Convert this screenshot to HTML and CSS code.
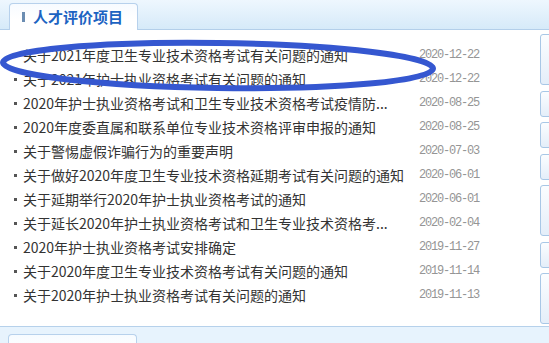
FILE: index.html
```html
<!DOCTYPE html>
<html lang="zh-CN">
<head>
<meta charset="utf-8">
<title>人才评价项目</title>
<link rel="stylesheet" href="styles.css">
</head>
<body>
<div class="page">
  <section class="panel">
    <div class="tabbar">
      <div class="tab"><span class="tab-mark"></span><span class="tab-title">人才评价项目</span></div>
    </div>
    <div class="panel-body">
      <ul class="news">
        <li class="row"><span class="dot"></span><span class="title">关于2021年度卫生专业技术资格考试有关问题的通知</span><span class="date">2020-12-22</span></li>
        <li class="row"><span class="dot"></span><span class="title">关于2021年护士执业资格考试有关问题的通知</span><span class="date">2020-12-22</span></li>
        <li class="row"><span class="dot"></span><span class="title">2020年护士执业资格考试和卫生专业技术资格考试疫情防...</span><span class="date">2020-08-25</span></li>
        <li class="row"><span class="dot"></span><span class="title">2020年度委直属和联系单位专业技术资格评审申报的通知</span><span class="date">2020-08-25</span></li>
        <li class="row"><span class="dot"></span><span class="title">关于警惕虚假诈骗行为的重要声明</span><span class="date">2020-07-03</span></li>
        <li class="row"><span class="dot"></span><span class="title">关于做好2020年度卫生专业技术资格延期考试有关问题的通知</span><span class="date">2020-06-01</span></li>
        <li class="row"><span class="dot"></span><span class="title">关于延期举行2020年护士执业资格考试的通知</span><span class="date">2020-06-01</span></li>
        <li class="row"><span class="dot"></span><span class="title">关于延长2020年护士执业资格考试和卫生专业技术资格考...</span><span class="date">2020-02-04</span></li>
        <li class="row"><span class="dot"></span><span class="title">2020年护士执业资格考试安排确定</span><span class="date">2019-11-27</span></li>
        <li class="row"><span class="dot"></span><span class="title">关于2020年度卫生专业技术资格考试有关问题的通知</span><span class="date">2019-11-14</span></li>
        <li class="row"><span class="dot"></span><span class="title">关于2020年护士执业资格考试有关问题的通知</span><span class="date">2019-11-13</span></li>
      </ul>
      <div class="side">
        <div class="side-btn tall"></div>
        <div class="side-btn"></div>
        <div class="side-btn"></div>
        <div class="side-btn"></div>
        <div class="side-btn tall"></div>
        <div class="side-btn"></div>
        <div class="side-btn tall"></div>
      </div>
    </div>
  </section>
  <section class="panel next">
    <div class="tabbar-next">
      <div class="tab"><span class="tab-mark"></span><span class="tab-title">人才评价动态</span></div>
    </div>
  </section>
  <svg class="annotation" width="549" height="343" viewBox="0 0 549 343" aria-hidden="true">
    <ellipse cx="218" cy="65.5" rx="215" ry="22.5" transform="rotate(0.8 218 65.5)" fill="none" stroke="#3557d0" stroke-width="6"/>
  </svg>
</div>
</body>
</html>
```
FILE: styles.css
```css
html, body {
  margin: 0;
  padding: 0;
  background: #ffffff;
}
.page {
  position: relative;
  width: 549px;
  height: 343px;
  overflow: hidden;
  font-family: "Noto Sans CJK SC", "Noto Sans", sans-serif;
}
.tabbar {
  display: flex;
  align-items: flex-end;
  height: 29px;
  padding-left: 9px;
  border-bottom: 1px solid #b3cfea;
  background: linear-gradient(#eef7fe, #d6eaf9);
}
.tab {
  display: flex;
  align-items: center;
  box-sizing: border-box;
  width: 129px;
  height: 27px;
  margin-bottom: -1px;
  padding-left: 12px;
  border: 1px solid #b7d1ec;
  border-bottom: none;
  border-radius: 4px 4px 0 0;
  background: linear-gradient(#f7fbff, #ffffff 60%);
}
.tab-mark {
  width: 3px;
  height: 10px;
  margin-right: 8px;
  background: #6b8db2;
}
.tab-title {
  font-size: 15px;
  font-weight: bold;
  color: #1c63c2;
  line-height: 16px;
}
.panel-body {
  display: flex;
  height: 296px;
  border-bottom: 1px solid #b6d1eb;
  background: #ffffff;
}
.news {
  list-style: none;
  margin: 0;
  padding: 13px 0 0 0;
  width: 540px;
  flex: none;
}
.row {
  display: flex;
  align-items: center;
  height: 24px;
  padding-left: 14px;
}
.dot {
  width: 3px;
  height: 3px;
  margin-right: 6px;
  background: #555555;
  flex: none;
}
.title {
  width: 396px;
  flex: none;
  white-space: nowrap;
  overflow: hidden;
  font-size: 14px;
  line-height: 24px;
  color: #333333;
}
.date {
  font-family: "Liberation Mono", monospace;
  font-size: 12px;
  letter-spacing: -1.2px;
  color: #959595;
  white-space: nowrap;
}
.side {
  display: flex;
  flex-direction: column;
  gap: 5.5px;
  padding-top: 4px;
}
.side-btn {
  box-sizing: border-box;
  width: 20px;
  height: 26px;
  border: 1px solid #a8c7e6;
  border-radius: 3px;
  background: linear-gradient(#fbfdff, #e4eef9);
}
.side-btn.tall {
  height: 51px;
}
.next {
  background: #e7f3fd;
  height: 16px;
}
.tabbar-next {
  display: flex;
  padding: 7px 0 0 8px;
}
.tabbar-next .tab {
  height: 30px;
  padding-top: 12px;
  align-items: flex-start;
}
.annotation {
  position: absolute;
  top: 0;
  left: 0;
  pointer-events: none;
}
```
